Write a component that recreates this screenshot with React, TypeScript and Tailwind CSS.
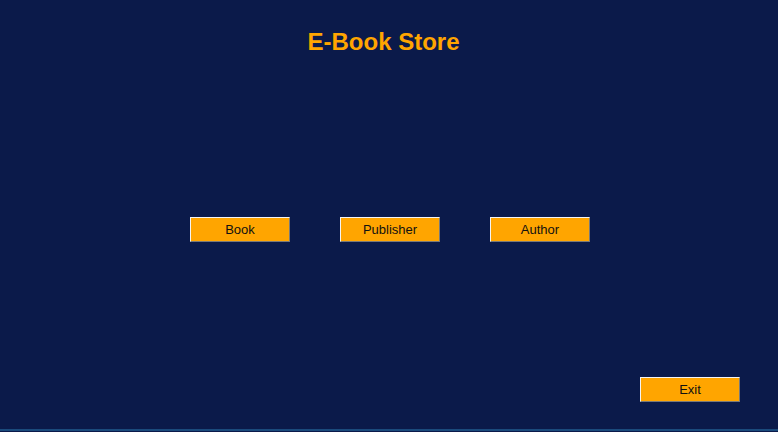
const Btn = ({ label }: { label: string }) => (
  <button className="h-[25px] w-[100px] border border-t-[#f4f4f4] border-l-[#f4f4f4] border-b-[#7a7a7a] border-r-[#7a7a7a] bg-[#ffa500] text-[13px] leading-none text-[#111111]">
    {label}
  </button>
);

const App = () => {
  return (
    <div className="flex h-[432px] w-full flex-col bg-[#0b1a4a] font-['Liberation_Sans',Arial,sans-serif]">
      <h1 className="pt-[28px] pr-[11px] text-center text-[24px] font-bold leading-[28px] text-[#ffa500]">
        E-Book Store
      </h1>
      <div className="mt-[161px] flex justify-center gap-[50px] pl-[2px]">
        <Btn label="Book" />
        <Btn label="Publisher" />
        <Btn label="Author" />
      </div>
      <div className="mt-[135px] flex justify-end pr-[38px]">
        <Btn label="Exit" />
      </div>
      <div className="flex-1" />
      <div className="h-[2px] bg-[#1b4a7c]" />
      <div className="h-[1px]" />
    </div>
  );
};

export default App;
